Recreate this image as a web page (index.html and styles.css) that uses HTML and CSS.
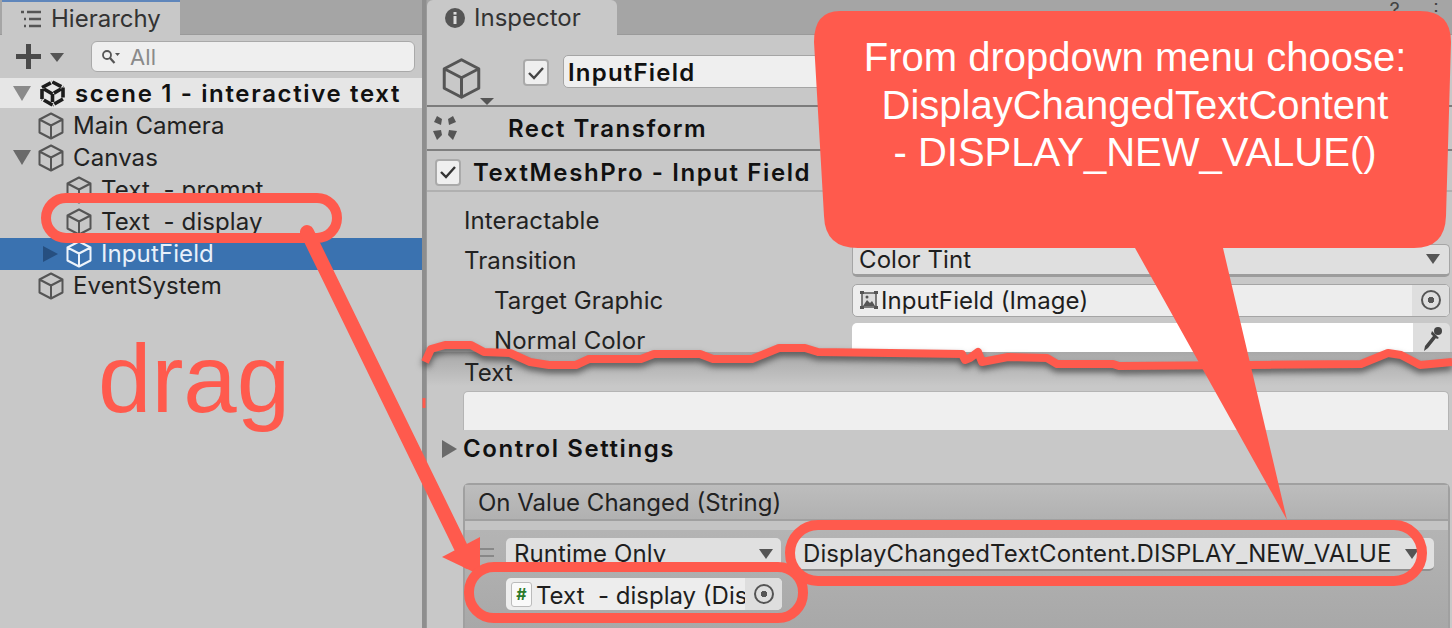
FILE: index.html
```html
<!DOCTYPE html>
<html>
    <head>
        <title>Hierarchy and Inspector</title>
        <link rel="stylesheet" href="styles.css">
    </head>
    <body>
        <svg class="defs" width="0" height="0">
            <symbol id="cube" viewBox="0 0 26 28">
                <path d="M13 1.5L24.5 7.5V20.5L13 26.5L1.5 20.5V7.5ZM1.5 7.5L13 13.5L24.5 7.5M13 13.5V26.5" fill="none" stroke="currentColor" stroke-width="2" stroke-linejoin="round"/>
            </symbol>
        </svg>
        <div class="app">
            <section class="hier">
                <div class="tabbar">
                    <div class="tab tab_hier">
                        <svg class="tab_icon" width="22" height="18" viewBox="0 0 22 18"><path d="M1 2h3M7 2h14M4 9h2M9 9h12M4 16h2M9 16h12" stroke="#555" stroke-width="2.4" fill="none"/></svg>
                        Hierarchy
                    </div>
                </div>
                <div class="toolbar">
                    <span class="plus"></span>
                    <span class="tri_down"></span>
                    <div class="search">
                        <svg width="20" height="16" viewBox="0 0 20 16"><circle cx="6" cy="6" r="4" fill="none" stroke="#555" stroke-width="1.8"/><path d="M9 9l4.500 5" stroke="#555" stroke-width="2.200"/><path d="M14 4h5l-2.500 3z" fill="#555"/></svg>
                        <span>All</span>
                    </div>
                </div>
                <div class="scene_row">
                    <span class="twisty"><i class="arrow_down arrow_light"></i></span>
                    <svg class="logo" width="27" height="27" viewBox="0 0 27 27"><path d="M13.500 2L24 7.500M24 7.500V19M24 19L13.500 25M13.500 25L3 19M3 19V7.500M3 7.500L13.500 2M5 9L13.500 14L22 9M13.500 14V22" fill="none" stroke="#1c1c1c" stroke-width="3.600" stroke-dasharray="10 1.500"/></svg>
                    <b>scene 1 - interactive text</b>
                </div>
                <ul class="tree">
                    <li class="row"><span class="twisty"></span><svg class="cube"><use href="#cube"/></svg>Main Camera</li>
                    <li class="row"><span class="twisty"><i class="arrow_down"></i></span><svg class="cube"><use href="#cube"/></svg>Canvas</li>
                    <li class="row lvl2"><span class="twisty"></span><svg class="cube"><use href="#cube"/></svg>Text  - prompt</li>
                    <li class="row lvl2"><span class="twisty"></span><svg class="cube"><use href="#cube"/></svg>Text  - display</li>
                    <li class="row lvl2 selected"><span class="twisty"><i class="arrow_right"></i></span><svg class="cube"><use href="#cube"/></svg>InputField</li>
                    <li class="row"><span class="twisty"></span><svg class="cube"><use href="#cube"/></svg>EventSystem</li>
                </ul>
            </section>

            <section class="insp">
                <div class="tabbar">
                    <div class="tab tab_insp">
                        <svg class="tab_icon" width="20" height="20" viewBox="0 0 20 20"><circle cx="10" cy="10" r="10" fill="#555"/><rect x="8.500" y="8" width="3" height="8" fill="#ddd"/><rect x="8.500" y="4" width="3" height="2.600" fill="#ddd"/></svg>
                        Inspector
                    </div>
                    <div class="tab_tools"><span>?</span><span>⋮</span></div>
                </div>
                <div class="head">
                    <svg class="head_cube"><use href="#cube"/></svg>
                    <span class="head_tri"></span>
                    <span class="check"><svg width="18" height="14" viewBox="0 0 18 14"><path d="M2 7l5 5L16 2" fill="none" stroke="#444" stroke-width="2.400"/></svg></span>
                    <div class="head_name">InputField</div>
                </div>
                <div class="comp comp_rect">
                    <svg width="24" height="24" viewBox="0 0 24 24" fill="#555"><path d="M4 0L9 3L8 9L1 6ZM20 0L15 3L16 9L23 6ZM0 15L8 14L9 19L4 24ZM24 15L16 14L15 19L20 24Z"/></svg>
                    <b>Rect Transform</b>
                </div>
                <div class="comp comp_tmp">
                    <span class="check"><svg width="18" height="14" viewBox="0 0 18 14"><path d="M2 7l5 5L16 2" fill="none" stroke="#333" stroke-width="2.400"/></svg></span>
                    <b>TextMeshPro - Input Field</b>
                </div>
                <div class="props">
                    <div class="prop"><span class="prop_label">Interactable</span></div>
                    <div class="prop">
                        <span class="prop_label">Transition</span>
                        <div class="field field_drop">Color Tint<i class="arrow_small"></i></div>
                    </div>
                    <div class="prop">
                        <span class="prop_label indent">Target Graphic</span>
                        <div class="field field_obj">
                            <svg width="20" height="20" viewBox="0 0 20 20"><rect x="3" y="3" width="14" height="14" fill="#ddd" stroke="#555" stroke-width="1.500"/><path d="M1 1h4v3H1zM15 1h4v3h-4zM1 16h4v3H1zM15 16h4v3h-4z" fill="#555"/><path d="M4 16l4-6 3 3 2-2 3 5z" fill="#555"/><circle cx="8" cy="7" r="1.500" fill="#555"/></svg>
                            <span class="obj_text">InputField (Image)</span>
                            <span class="target"><i></i></span>
                        </div>
                    </div>
                    <div class="prop">
                        <span class="prop_label indent">Normal Color</span>
                        <div class="field field_color">
                            <span class="swatch"></span>
                            <span class="dropper"><svg width="24" height="28" viewBox="0 0 24 28"><circle cx="18" cy="6" r="4" fill="#444"/><path d="M12 6l7 7-2 1-1-1-8 10-4 3 1-5 8-10-2-2z" fill="#444"/></svg></span>
                        </div>
                    </div>
                </div>
                <div class="lower">
                    <div class="text_label">Text</div>
                    <div class="text_area"></div>
                    <div class="foldout"><i class="arrow_fold"></i><b>Control Settings</b></div>
                    <div class="panel">
                        <div class="panel_head">On Value Changed (String)</div>
                        <div class="panel_strip"></div>
                        <div class="panel_body">
                            <div class="call">
                                <span class="handle"></span>
                                <div class="drop drop_mode">Runtime Only<i class="arrow_small"></i></div>
                                <div class="drop drop_func">DisplayChangedTextContent.DISPLAY_NEW_VALUE<i class="arrow_small"></i></div>
                            </div>
                            <div class="objfield">
                                <span class="script_icon">#</span>
                                <span class="objfield_text">Text  - display (Dis</span>
                                <span class="target"><i></i></span>
                            </div>
                        </div>
                    </div>
                </div>
            </section>
        </div>

        <!-- annotations drawn on top of the screenshot -->
        <svg class="marks" width="1452" height="628" viewBox="0 0 1452 628">
            <polyline class="tear" points="425,362 431,349 445,345 471,345 484,352 510,353 530,362 549,365 576,365 589,359 641,359 654,354 700,354 713,359 752,359 779,348 805,348 818,352 962,354 965,360 970,358 978,352 982,362 1008,357 1047,358 1057,364 1113,364 1119,366 1361,364 1388,353 1401,355 1420,365 1452,362"/>
            <path class="mark_line" d="M424 398V408"/>
            <rect class="ring" x="46" y="198" width="291" height="40" rx="20"/>
            <path class="mark_line mark_arrow" d="M307 232L468 562"/>
            <path class="mark_fill" d="M480 537L442 557L480 575Z"/>
            <rect class="ring" x="469" y="567" width="334" height="51" rx="25"/>
            <rect class="ring" x="790" y="525" width="632" height="56" rx="28"/>
            <path class="mark_fill" d="M840 11H1420Q1451 11 1451 42L1446 216Q1445 248 1414 248H1223L1287 520L1135 248H858Q825 248 824 216L814 42Q814 11 840 11Z"/>
        </svg>
        <div class="callout">From dropdown menu choose:<br>DisplayChangedTextContent<br>- DISPLAY_NEW_VALUE()</div>
        <div class="drag">drag</div>
    </body>
</html>
```

FILE: styles.css
```css
*{
    box-sizing: border-box;
}
html, body{
    margin: 0;
    padding: 0;
    height: 100%;
    overflow: hidden;
}
body{
    position: relative;
    font-family: 'Inter', 'Liberation Sans', sans-serif;
    font-size: 24px;
    letter-spacing: 0.1px;
    color: #1e1e1e;
    background: #c8c8c8;
}
i{
    display: block;
}
.defs{
    position: absolute;
}
.app{
    display: flex;
    height: 628px;
}
.hier{
    width: 426px;
    flex: none;
    background: #c8c8c8;
    border-right: 4px solid #8e8e8e;
}
.insp{
    flex: 1;
    min-width: 0;
    background: #c8c8c8;
    border-left: 1px solid #9a9a9a;
}

/* tabs */
.tabbar{
    display: flex;
    justify-content: space-between;
    height: 35px;
    background: #a5a5a5;
    border-bottom: 1px solid #9a9a9a;
}
.tab{
    display: flex;
    align-items: center;
    height: 35px;
    background: #c8c8c8;
    color: #333;
    letter-spacing: 0;
}
.tab_hier{
    width: 178px;
    margin-left: 2px;
    padding-left: 18px;
    border-top: 2px solid #5f86bb;
}
.tab_hier .tab_icon{
    margin-right: 9px;
}
.tab_insp{
    width: 190px;
    padding-left: 18px;
    border-radius: 6px 6px 0 0;
}
.tab_insp .tab_icon{
    margin-right: 9px;
}
.tab_tools{
    display: flex;
    gap: 26px;
    padding: 0 6px 0 0;
    color: #444;
    font-size: 20px;
    line-height: 20px;
}

/* hierarchy */
.toolbar{
    display: flex;
    align-items: center;
    height: 43px;
    padding: 0 7px 0 16px;
    background: #c8c8c8;
}
.plus{
    position: relative;
    width: 25px;
    height: 25px;
    background: linear-gradient(#4a4a4a, #4a4a4a) center / 100% 5px no-repeat,
                linear-gradient(#4a4a4a, #4a4a4a) center / 5px 100% no-repeat;
}
.tri_down{
    width: 0;
    height: 0;
    margin: 2px 27px 0 9px;
    border-left: 7px solid transparent;
    border-right: 7px solid transparent;
    border-top: 9px solid #555;
}
.search{
    display: flex;
    align-items: center;
    gap: 9px;
    flex: 1;
    height: 31px;
    padding-left: 9px;
    background: #efefef;
    border: 1px solid #a9a9a9;
    border-radius: 6px;
    color: #8a8a8a;
    font-size: 22px;
}
.scene_row{
    display: flex;
    align-items: center;
    height: 30px;
    background: #e6e6e6;
    margin-bottom: 2px;
    color: #111;
}
.scene_row b{
    font-weight: 600;
    letter-spacing: 1.65px;
    white-space: pre;
}
.logo{
    margin: 0 9px 0 1px;
    flex: none;
}
.tree{
    list-style: none;
    margin: 0;
    padding: 0;
}
.row{
    display: flex;
    align-items: center;
    height: 32px;
    padding-bottom: 2px;
    white-space: pre;
    color: #222;
}
.lvl2{
    padding-left: 28px;
}
.selected{
    background: #3a72b0;
    color: #e8f0fa;
}
.twisty{
    display: flex;
    align-items: center;
    width: 38px;
    padding-left: 13px;
    flex: none;
}
.cube{
    width: 26px;
    height: 28px;
    margin: 2px 9px 0 0;
    color: #555;
    flex: none;
}
.selected .cube{
    color: #eef4fb;
}
.arrow_down{
    width: 0;
    height: 0;
    border-left: 9px solid transparent;
    border-right: 9px solid transparent;
    border-top: 15px solid #6a6a6a;
}
.arrow_light{
    border-top-color: #8a8a8a;
}
.arrow_right{
    width: 0;
    height: 0;
    margin: 2px 0 0 2px;
    border-top: 8px solid transparent;
    border-bottom: 8px solid transparent;
    border-left: 15px solid #264f80;
}

/* inspector header */
.head{
    position: relative;
    display: flex;
    align-items: flex-start;
    height: 72px;
    padding: 20px 0 0 96px;
    border-bottom: 2px solid #7c7c7c;
}
.head_cube{
    position: absolute;
    left: 15px;
    top: 22px;
    width: 39px;
    height: 43px;
    color: #555;
}
.head_tri{
    position: absolute;
    left: 53px;
    top: 63px;
    border-left: 7px solid transparent;
    border-right: 7px solid transparent;
    border-top: 7px solid #555;
}
.check{
    display: flex;
    align-items: center;
    justify-content: center;
    width: 26px;
    height: 27px;
    margin-top: 4px;
    background: #efefef;
    border: 2px solid #aaa;
    border-radius: 4px;
    flex: none;
}
.head_name{
    width: 520px;
    height: 33px;
    margin-left: 14px;
    padding-left: 4px;
    background: #efefef;
    border: 1px solid #a5a5a5;
    border-radius: 5px;
    color: #111;
    font-weight: 600;
    line-height: 34px;
    letter-spacing: 1.2px;
}
.comp{
    display: flex;
    align-items: center;
    color: #111;
    letter-spacing: 1.5px;
}
.comp b{
    font-weight: 600;
}
.comp_rect{
    height: 44px;
    padding: 0 0 0 6px;
    border-bottom: 2px solid #7f7f7f;
}
.comp_rect b{
    margin-left: 51px;
}
.comp_tmp{
    height: 41px;
    padding: 3px 0 0 8px;
    border-bottom: 2px solid #b0b0b0;
}
.comp_tmp .check{
    margin-top: 0;
}
.comp_tmp b{
    margin-left: 12px;
    letter-spacing: 1.6px;
}

/* properties */
.props{
    height: 160px;
    padding-top: 8px;
}
.prop{
    display: flex;
    align-items: center;
    height: 40px;
    padding-left: 37px;
}
.prop_label{
    width: 388px;
    flex: none;
    color: #222;
}
.indent{
    padding-left: 30px;
}
.field{
    display: flex;
    align-items: center;
    width: 598px;
    height: 33px;
    border-radius: 5px;
    border: 1px solid #a5a5a5;
    overflow: hidden;
}
.field_drop{
    justify-content: space-between;
    padding: 0 9px 0 6px;
    background: #dfdfdf;
    border-bottom: 3px solid #9c9c9c;
}
.field_obj{
    padding-left: 6px;
    background: #ededed;
}
.obj_text{
    flex: 1;
    margin-left: 2px;
}
.target{
    display: flex;
    align-items: center;
    justify-content: center;
    width: 37px;
    height: 100%;
    background: #dedede;
    flex: none;
}
.target i{
    width: 20px;
    height: 20px;
    border: 2px solid #555;
    border-radius: 50%;
    background: radial-gradient(circle, #555 0 3px, transparent 3.500px);
}
.field_color{
    display: flex;
    align-items: stretch;
    align-self: flex-start;
    margin-top: 3px;
    border: none;
    border-radius: 5px 5px 0 0;
    height: 29px;
}
.swatch{
    flex: 1;
    background: #fff;
}
.dropper{
    display: flex;
    justify-content: center;
    padding-top: 2px;
    width: 37px;
    background: #dedede;
}
.arrow_small{
    width: 0;
    height: 0;
    border-left: 7px solid transparent;
    border-right: 7px solid transparent;
    border-top: 10px solid #555;
    flex: none;
}

/* below the cut */
.lower{
    background: linear-gradient(#a8a8a8, #c8c8c8 34px);
}
.text_label{
    height: 39px;
    padding: 6px 0 0 37px;
    color: #222;
}
.text_area{
    width: 986px;
    height: 39px;
    margin-left: 36px;
    background: #efefef;
    border: 1px solid #b4b4b4;
    border-bottom: none;
    border-radius: 5px 5px 0 0;
}
.foldout{
    display: flex;
    align-items: center;
    height: 37px;
    padding-left: 15px;
    color: #111;
}
.foldout b{
    font-weight: 600;
    letter-spacing: 1.6px;
}
.arrow_fold{
    width: 0;
    height: 0;
    margin-right: 6px;
    border-top: 9px solid transparent;
    border-bottom: 9px solid transparent;
    border-left: 15px solid #6a6a6a;
}
.panel{
    width: 987px;
    height: 145px;
    margin: 16px 0 0 36px;
    background: #a9a9a9;
    border: 2px solid #a0a0a0;
    border-bottom: none;
    border-radius: 6px 6px 0 0;
}
.panel_head{
    display: flex;
    align-items: center;
    height: 36px;
    padding-left: 13px;
    background: linear-gradient(#bdbdbd, #b1b1b1);
    border-bottom: 2px solid #a0a0a0;
    color: #222;
    letter-spacing: 0;
}
.panel_strip{
    height: 9px;
    background: #c4c4c4;
}
.panel_body{
    padding-top: 8px;
    background: linear-gradient(#b4b4b4, #a8a8a8);
    height: 98px;
}
.call{
    position: relative;
    display: flex;
    gap: 9px;
    padding-left: 41px;
}
.handle{
    position: absolute;
    left: 15px;
    top: 10px;
    width: 14px;
    height: 9px;
    border-top: 2px solid #888;
    border-bottom: 2px solid #888;
}
.drop{
    display: flex;
    align-items: center;
    justify-content: space-between;
    height: 33px;
    padding: 0 8px;
    background: #e0e0e0;
    border-radius: 5px;
    border-bottom: 2px solid #909090;
    white-space: nowrap;
}
.drop_mode{
    width: 275px;
}
.drop_func{
    width: 644px;
    padding: 0 15px 0 13px;
}
.objfield{
    display: flex;
    align-items: center;
    width: 276px;
    height: 32px;
    margin: 7px 0 0 41px;
    padding-left: 5px;
    background: #ededed;
    border-radius: 5px;
    overflow: hidden;
    white-space: pre;
}
.script_icon{
    display: flex;
    align-items: center;
    justify-content: center;
    width: 21px;
    height: 25px;
    flex: none;
    background: #fafafa;
    border: 1px solid #bbb;
    border-radius: 3px;
    color: #2c7a2c;
    font-size: 16px;
    font-weight: 700;
}
.objfield_text{
    flex: 1;
    min-width: 0;
    margin: 2px 0 0 4px;
    letter-spacing: 0;
}

/* annotations */
.marks{
    position: absolute;
    left: 0;
    top: 0;
}
.ring{
    fill: none;
    stroke: #ff5a4d;
    stroke-width: 10;
}
.tear{
    fill: none;
    stroke: #ff5a4d;
    stroke-width: 8;
    stroke-linejoin: round;
    filter: drop-shadow(0 4px 3px rgba(50, 50, 50, 0.7));
}
.mark_line{
    fill: none;
    stroke: #ff5a4d;
    stroke-width: 3;
}
.mark_arrow{
    stroke-width: 14;
    stroke-linecap: round;
}
.mark_fill{
    fill: #ff5a4d;
}
.callout{
    position: absolute;
    left: 815px;
    top: 34px;
    width: 640px;
    color: #fff;
    font-family: 'Liberation Sans', Arial, sans-serif;
    font-size: 40px;
    line-height: 47.5px;
    letter-spacing: 0;
    text-align: center;
}
.drag{
    position: absolute;
    left: 98px;
    top: 329px;
    color: #ff5a4d;
    font-family: 'Liberation Sans', Arial, sans-serif;
    font-size: 96px;
    line-height: 100px;
    letter-spacing: 0;
}
```
